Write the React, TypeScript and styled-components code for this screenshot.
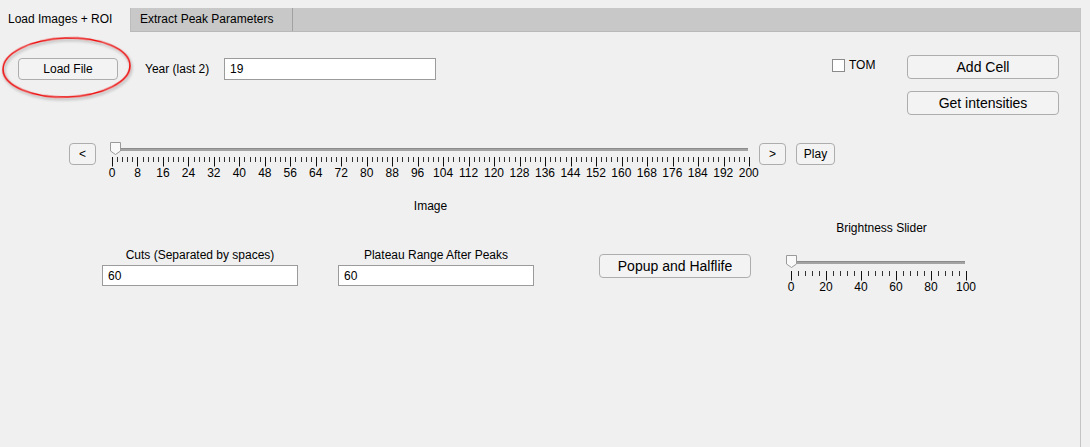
import React from 'react';
import styled, { createGlobalStyle } from 'styled-components';

const Global = createGlobalStyle`
  html, body { margin: 0; padding: 0; background: #f0f0f0; }
  body { font-family: "Liberation Sans", Arial, sans-serif; font-size: 12px; color: #000; }
  * { box-sizing: border-box; }
`;

const Root = styled.div`
  position: relative;
  width: 1090px;
  height: 447px;
  padding-top: 8px;
  overflow: hidden;
`;

const Frame = styled.div`
  width: 1081px;
  height: 439px;
  border-right: 1px solid #c4c4c4;
  display: flex;
  flex-direction: column;
`;

const TabBar = styled.div`
  display: flex;
  height: 24px;
  flex: none;
  background: #c8c8c8;
  border-bottom: 1px solid #b9b9b9;
`;

const Tab = styled.div<{ $active?: boolean; $w: number }>`
  width: ${p => p.$w}px;
  height: ${p => (p.$active ? 24 : 23)}px;
  line-height: 23px;
  padding-left: ${p => (p.$active ? 8 : 9)}px;
  background: ${p => (p.$active ? '#f0f0f0' : '#c8c8c8')};
  border-right: 1px solid ${p => (p.$active ? '#bcbcbc' : '#a2a2a2')};
  font-size: 12px;
  white-space: nowrap;
  position: relative;
  z-index: ${p => (p.$active ? 1 : 0)};
`;

const Panel = styled.div`
  flex: 1;
  display: flex;
  flex-direction: column;
`;

const TopRow = styled.div`
  display: flex;
  align-items: flex-start;
  margin-top: 23px;
`;

const LeftGroup = styled.div`
  display: flex;
  align-items: center;
  margin-top: 3px;
  padding-left: 18px;
`;

const Button = styled.button<{ $w: number; $h: number; $size?: number }>`
  width: ${p => p.$w}px;
  height: ${p => p.$h}px;
  flex: none;
  padding: 0;
  margin: 0;
  border: 1px solid #adadad;
  border-radius: 4px;
  background: #f3f3f3;
  color: #000;
  font-family: "Liberation Sans", Arial, sans-serif;
  font-size: ${p => p.$size ?? 12}px;
  display: flex;
  align-items: center;
  justify-content: center;
  white-space: nowrap;
`;

const InlineLabel = styled.span<{ $ml: number; $w: number }>`
  margin-left: ${p => p.$ml}px;
  width: ${p => p.$w}px;
  font-size: 12px;
  white-space: nowrap;
`;

const TextInput = styled.input<{ $w: number; $h: number }>`
  width: ${p => p.$w}px;
  height: ${p => p.$h}px;
  margin: 0;
  border: 1px solid #9b9b9b;
  background: #fff;
  padding: 0 0 0 5px;
  font-family: "Liberation Sans", Arial, sans-serif;
  font-size: 12px;
  color: #000;
  outline: none;
`;

const CheckGroup = styled.div`
  display: flex;
  align-items: center;
  gap: 4px;
  width: 75px;
  margin-left: 396px;
  margin-top: 4px;
`;

const CheckBox = styled.span`
  width: 13px;
  height: 13px;
  background: #fff;
  border: 1px solid #8a8a8a;
  flex: none;
`;

const CheckText = styled.span`
  font-size: 12px;
  margin-top: -2px;
`;

const RightCol = styled.div`
  display: flex;
  flex-direction: column;
  gap: 12px;
`;

const SliderRow = styled.div`
  display: flex;
  align-items: flex-start;
  margin-top: 28px;
  padding-left: 69px;
`;

const SliderCol = styled.div<{ $w: number; $ml: number; $mt: number }>`
  width: ${p => p.$w}px;
  margin-left: ${p => p.$ml}px;
  margin-top: ${p => p.$mt}px;
  display: flex;
  flex-direction: column;
`;

const TickLabels = styled.div`
  display: flex;
  justify-content: space-between;
  line-height: 13px;
  font-size: 12px;
`;

const TickLabel = styled.span`
  width: 20px;
  display: flex;
  justify-content: center;
  white-space: nowrap;
`;

const Caption = styled.div<{ $mt?: number; $pl?: number }>`
  margin-top: ${p => p.$mt ?? 0}px;
  padding-left: ${p => p.$pl ?? 0}px;
  line-height: 14px;
  font-size: 12px;
  text-align: center;
  white-space: nowrap;
`;

const GapButton = styled.div<{ $ml: number }>`
  margin-left: ${p => p.$ml}px;
`;

const BottomRow = styled.div`
  display: flex;
  align-items: flex-start;
  margin-top: 8px;
  padding-left: 102px;
`;

const FieldCol = styled.div<{ $ml: number }>`
  width: 196px;
  margin-left: ${p => p.$ml}px;
  margin-top: 27px;
  display: flex;
  flex-direction: column;
  gap: 3px;
`;

const FieldLabel = styled.div`
  line-height: 14px;
  text-align: center;
  white-space: nowrap;
  font-size: 12px;
`;

const PopupWrap = styled.div`
  margin-left: 65px;
  margin-top: 33px;
`;

const BrightCol = styled.div`
  margin-left: 30px;
  width: 195px;
  display: flex;
  flex-direction: column;
`;

const Annotation = styled.svg`
  position: absolute;
  left: 0;
  top: 34px;
  width: 140px;
  height: 72px;
  pointer-events: none;
  overflow: visible;
`;

type SliderProps = {
  width: number;
  height: number;
  tickStart: number;
  tickSpan: number;
  intervals: number;
  majorEvery: number;
  tickY: number;
  majorLen: number;
  minorLen: number;
  thumbX: number;
  thumbY: number;
  thumbW: number;
  trackX1: number;
  trackX2: number;
  trackY: number;
  labels: string[];
};

const SliderGraphic: React.FC<SliderProps> = p => {
  const ticks = [];
  for (let i = 0; i <= p.intervals; i++) {
    const x = Math.round(p.tickStart + (i * p.tickSpan) / p.intervals) + 0.5;
    const major = i % p.majorEvery === 0;
    ticks.push(
      <line
        key={i}
        x1={x}
        x2={x}
        y1={p.tickY}
        y2={p.tickY + (major ? p.majorLen : p.minorLen)}
        stroke={major ? '#111' : '#333'}
        strokeWidth={1}
      />
    );
  }
  const tx = p.thumbX;
  const tw = p.thumbW;
  const ty = p.thumbY;
  return (
    <>
      <svg width={p.width} height={p.height} style={{ display: 'block' }}>
        <rect x={p.trackX1} y={p.trackY} width={p.trackX2 - p.trackX1} height={3} fill="#a3a3a3" />
        <rect x={p.trackX1} y={p.trackY} width={p.trackX2 - p.trackX1} height={1} fill="#8c8c8c" />
        {ticks}
        <polygon
          points={`${tx + 0.5},${ty + 0.5} ${tx + tw - 0.5},${ty + 0.5} ${tx + tw - 0.5},${ty + 9} ${tx + tw / 2},${ty + 12.5} ${tx + 0.5},${ty + 9}`}
          fill="#f9f9f9"
          stroke="#9a9a9a"
          strokeWidth={1}
          strokeLinejoin="round"
        />
      </svg>
      <TickLabels>
        {p.labels.map(l => (
          <TickLabel key={l}>{l}</TickLabel>
        ))}
      </TickLabels>
    </>
  );
};

const imageLabels = Array.from({ length: 26 }, (_, i) => String(i * 8));
const brightLabels = ['0', '20', '40', '60', '80', '100'];

export default function App() {
  return (
    <Root>
      <Global />
      <Frame>
        <TabBar>
          <Tab $active $w={131}>Load Images + ROI</Tab>
          <Tab $w={162}>Extract Peak Parameters</Tab>
        </TabBar>
        <Panel>
          <TopRow>
            <LeftGroup>
              <Button $w={100} $h={22}>Load File</Button>
              <InlineLabel $ml={27} $w={79}>Year (last 2)</InlineLabel>
              <TextInput $w={212} $h={22} defaultValue="19" />
            </LeftGroup>
            <CheckGroup>
              <CheckBox />
              <CheckText>TOM</CheckText>
            </CheckGroup>
            <RightCol>
              <Button $w={152} $h={24} $size={14}>Add Cell</Button>
              <Button $w={152} $h={24} $size={14}>Get intensities</Button>
            </RightCol>
          </TopRow>

          <SliderRow>
            <Button $w={27} $h={22}>&lt;</Button>
            <SliderCol $w={657} $ml={6} $mt={-1}>
              <SliderGraphic
                width={657}
                height={25}
                tickStart={10}
                tickSpan={637}
                intervals={125}
                majorEvery={5}
                tickY={15}
                majorLen={9.5}
                minorLen={5}
                thumbX={8}
                thumbY={0}
                thumbW={11}
                trackX1={13}
                trackX2={646}
                trackY={6}
                labels={imageLabels}
              />
              <Caption $mt={19}>Image</Caption>
            </SliderCol>
            <Button $w={27} $h={22}>&gt;</Button>
            <GapButton $ml={10}>
              <Button $w={39} $h={22}>Play</Button>
            </GapButton>
          </SliderRow>

          <BottomRow>
            <FieldCol $ml={0}>
              <FieldLabel>Cuts (Separated by spaces)</FieldLabel>
              <TextInput $w={196} $h={21} defaultValue="60" />
            </FieldCol>
            <FieldCol $ml={40}>
              <FieldLabel>Plateau Range After Peaks</FieldLabel>
              <TextInput $w={196} $h={21} defaultValue="60" />
            </FieldCol>
            <PopupWrap>
              <Button $w={152} $h={24} $size={14}>Popup and Halflife</Button>
            </PopupWrap>
            <BrightCol>
              <Caption $pl={6}>Brightness Slider</Caption>
              <SliderCol $w={195} $ml={0} $mt={19}>
                <SliderGraphic
                  width={195}
                  height={27}
                  tickStart={10}
                  tickSpan={175}
                  intervals={25}
                  majorEvery={5}
                  tickY={17}
                  majorLen={9.5}
                  minorLen={5}
                  thumbX={5}
                  thumbY={1}
                  thumbW={11}
                  trackX1={12}
                  trackX2={184}
                  trackY={7}
                  labels={brightLabels}
                />
              </SliderCol>
            </BrightCol>
          </BottomRow>
        </Panel>
      </Frame>
      <Annotation viewBox="0 0 140 72">
        <defs>
          <filter id="shadow" x="-20%" y="-20%" width="140%" height="150%">
            <feDropShadow dx="1" dy="2" stdDeviation="1.4" floodColor="#000" floodOpacity="0.35" />
          </filter>
        </defs>
        <ellipse
          cx={66.5}
          cy={33.5}
          rx={63.5}
          ry={29.5}
          fill="none"
          stroke="#ee1111"
          strokeWidth={1.6}
          transform="rotate(-2 66.5 33.5)"
          filter="url(#shadow)"
        />
      </Annotation>
    </Root>
  );
}
